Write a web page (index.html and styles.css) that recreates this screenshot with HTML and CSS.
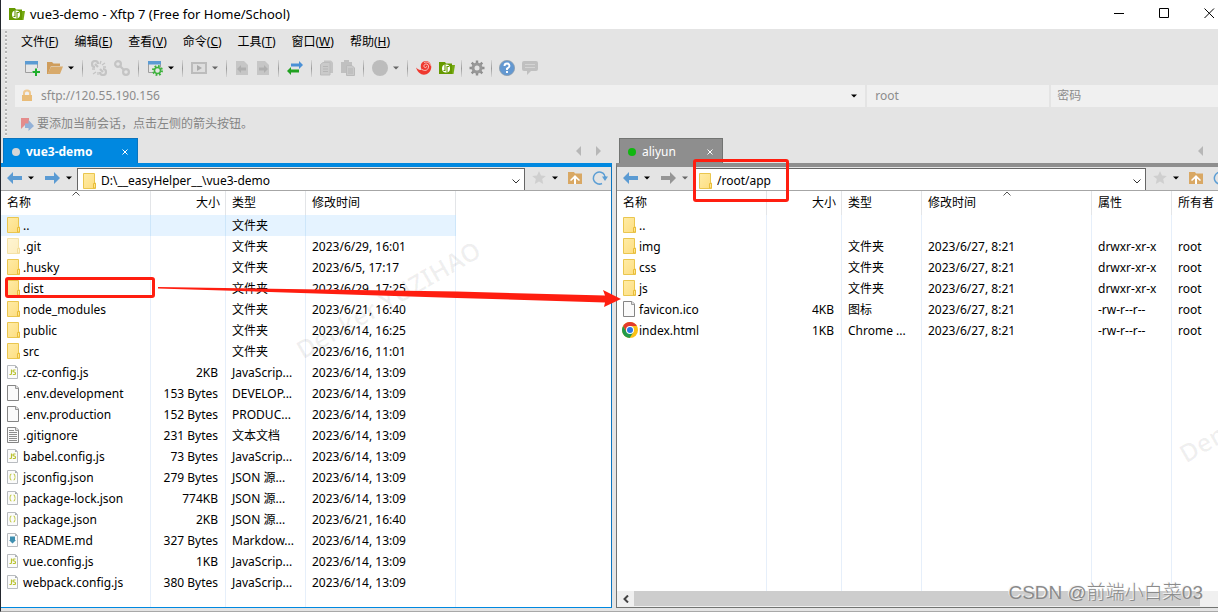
FILE: index.html
```html
<!DOCTYPE html>
<html lang="zh-CN">
<head>
<meta charset="utf-8">
<title>vue3-demo - Xftp 7 (Free for Home/School)</title>
<link rel="stylesheet" href="styles.css">
</head>
<body>
<svg class="defs" aria-hidden="true">
  <defs>
    <linearGradient id="gold" x1="0" y1="0" x2="1" y2="1"><stop offset="0" stop-color="#ffeca6"/><stop offset="1" stop-color="#fddd80"/></linearGradient>
  </defs>
  <symbol id="folder" viewBox="0 0 16 16"><path d="M1.500 .5h11v9.500h1v5.500h-12z" fill="url(#gold)" stroke="#eac64f"/><path d="M11.500 15v-4.500h2V15z" fill="#ffe690" stroke="#e9bd3a"/></symbol>
  <symbol id="page" viewBox="0 0 16 16"><path d="M1.500 .5h8.500l2.500 2.500v12.500h-11z" fill="#fafafa" stroke="#858585"/><path d="M9.500 .5v3h3" fill="#ddd" stroke="#999"/></symbol>
  <symbol id="text" viewBox="0 0 16 16"><use href="#page"/><path d="M3 3.500h5M3 5.500h8M3 7.500h8M3 9.500h8M3 11.500h8M3 13.500h8" stroke="#8d8d8d"/></symbol>
  <symbol id="paper" viewBox="0 0 16 16"><path d="M1.500 1.500h8l2 2v11h-10z" fill="#fbfbfb" stroke="#b9bcc0"/><path d="M9 1.500v2.500h2.500z" fill="#a7abb0"/></symbol>
  <symbol id="js" viewBox="0 0 16 16"><use href="#paper"/><path d="M5.500 5.500v4q0 1-1 1H3.500M9.500 6H7.800q-.8 0-.8 1t1.200 1 1.300 1.200-1 1.300H6.800" fill="none" stroke="#b9c22f" stroke-width="1.200"/></symbol>
  <symbol id="json" viewBox="0 0 16 16"><use href="#paper"/><path d="M5.500 5q-1.300 0-1.300 1.500T3.500 8q.7 0 .7 1.500t1.300 1.500M7.500 5q1.300 0 1.300 1.500T9.500 8q-.7 0-.7 1.500T7.500 11" fill="none" stroke="#c5cd52" stroke-width="1.100"/></symbol>
  <symbol id="md" viewBox="0 0 16 16"><use href="#paper"/><path d="M4 4.500h5v3.500h1L6.500 11.500 3 8h1z" fill="#3f8fb0"/></symbol>
  <symbol id="chrome" viewBox="0 0 16 16"><circle cx="8" cy="8" r="8" fill="#fbc116"/><path d="M1.100 4A8 8 0 0 1 14.900 4H8L4.600 10z" fill="#e33b2e"/><path d="M1.100 4A8 8 0 0 0 7.600 16l3.900-6H4.600z" fill="#229a4c"/><circle cx="8" cy="8" r="4" fill="#fff"/><circle cx="8" cy="8" r="3" fill="#2876e8"/></symbol>
  <symbol id="left" viewBox="0 0 16 16"><path d="M0 8l6-6v4h9v4H6v4z"/></symbol>
  <symbol id="right" viewBox="0 0 16 16"><path d="M15 8L9 2v4H0v4h9v4z"/></symbol>
  <symbol id="caret" viewBox="0 0 6 4"><path d="M0 .5h6L3 3.500z"/></symbol>
  <symbol id="star" viewBox="0 0 16 16"><path d="M8 1l2 4.500 4.800.4-3.600 3.200 1 4.900L8 11.500 3.800 14l1-4.900L1.200 5.900 6 5.500z" fill="#cfcfcf"/></symbol>
  <symbol id="up" viewBox="0 0 16 16"><path d="M1 2h6l1 1.500h7V14H1z" fill="#d9a864"/><path d="M3 10l5-5 5 5-1 1-3-2.500V14H7V8.500L4 11z" fill="#fff"/></symbol>
  <symbol id="reload" viewBox="0 0 16 16"><path d="M12.500 5A6 6 0 1 0 10 13.500" fill="none" stroke="#5c9ed4" stroke-width="1.500"/><path d="M12 4v2.500h-2l3 4.500 3-4.500h-2z" fill="#5c9ed4"/></symbol>
  <symbol id="green" viewBox="0 0 16 16"><path d="M0 2h6l1 1.500h6V14H0z" fill="#659900"/><path d="M13 5h3l-1.500 9H13z" fill="#75aa12"/><circle cx="7" cy="8.500" r="4" fill="#fff"/><path d="M6 4.500v6H4.500M8 12.500v-6h2" fill="none" stroke="#659900" stroke-width="1.100"/></symbol>
  <symbol id="window" viewBox="0 0 16 16"><path d="M1.500 1.500h12v11h-12z" fill="#e6e6e6" stroke="#9e9e9e"/><path d="M1 1h13v3.500H1z" fill="#5b9bd3"/></symbol>
  <symbol id="newwin" viewBox="0 0 16 16"><use href="#window"/><path d="M8 12h8M12 8v8" stroke="#e4e4e4" stroke-width="4"/><path d="M8.500 12H16M12 8.500V16" stroke="#1fae2c" stroke-width="2"/></symbol>
  <symbol id="setwin" viewBox="0 0 16 16"><use href="#window"/><circle cx="10.500" cy="10.500" r="4" fill="#e4e4e4" stroke="#3eb23d" stroke-width="3" stroke-dasharray="1.600 1.540"/><circle cx="10.500" cy="10.500" r="3" fill="#e4e4e4" stroke="#3eb23d" stroke-width="1.500"/></symbol>
  <symbol id="open" viewBox="0 0 16 16"><path d="M0 2h5l1.500 1.500H13V6H4L1 14H0z" fill="#cf9d5c"/><path d="M4 6.500h12L13 14H.8z" fill="#d8aa6b"/></symbol>
  <symbol id="link" viewBox="0 0 16 16"><g fill="none" stroke="#c4c4c4" stroke-width="2.200"><circle cx="4" cy="4" r="2.900"/><circle cx="12" cy="12" r="2.900"/><path d="M5.500 5.500l5 5"/></g></symbol>
  <symbol id="unlink" viewBox="0 0 16 16"><g fill="none" stroke="#c4c4c4"><path d="M7 4A3 3 0 1 0 4 7M9 12a3 3 0 1 0 3-3M4 4l3 3M9 9l3 3" stroke-width="2.200"/><path d="M9 4l1-3M11 5l3-2M12 7h3M1 9h3M2 14l3-2M7 15v-3" stroke-width="1.300"/></g></symbol>
  <symbol id="play" viewBox="0 0 16 16"><path d="M1 3h14v10H1z" fill="#dedede" stroke="#bcbcbc" stroke-width="2"/><path d="M6 5l5 3-5 3z" fill="#ababab"/></symbol>
  <symbol id="docleft" viewBox="0 0 14 16"><path d="M1 1h8l4 4v10H1z" fill="#c6c6c6"/><path d="M2 9l4-4v2.500h5v3H6V13z" fill="#afafaf"/></symbol>
  <symbol id="docright" viewBox="0 0 14 16"><path d="M1 1h8l4 4v10H1z" fill="#c6c6c6"/><path d="M12 9L8 5v2.500H3v3h5V13z" fill="#afafaf"/></symbol>
  <symbol id="swap" viewBox="0 0 16 16"><path d="M16 5l-4-4v2.500H4v3h8V9z" fill="#4a90d6"/><path d="M0 11l4-4v2.500h8v3H4V15z" fill="#21a121"/></symbol>
  <symbol id="copy" viewBox="0 0 14 16"><path d="M4 .5h7l2 2V13H4z" fill="#c4c4c4"/><path d="M.5 4.500L3 2.500h7V15H.5z" fill="#cacaca" stroke="#bcbcbc"/><path d="M3 6.500h5M3 9h5M3 11.500h5" stroke="#b6b6b6"/></symbol>
  <symbol id="paste" viewBox="0 0 14 16"><path d="M0 2h3V0h5v2h3v11H0z" fill="#c0c0c0"/><path d="M5.500 5.500H11l2.500 2.500v7.500h-8z" fill="#cacaca" stroke="#bababa"/><path d="M7 9h5M7 11h5M7 13h5" stroke="#b6b6b6"/></symbol>
  <symbol id="disc" viewBox="0 0 16 16"><circle cx="8" cy="8" r="8" fill="#bcbcbc"/></symbol>
  <symbol id="swirl" viewBox="0 0 16 16"><path d="M0 7.500C2 14 8 17 13 12.500 18 7 14 0 9 1 4 2 4 8 6 9.500 4 10.500 2 9.500 0 7.500z" fill="#ef392f"/><path d="M6 9.500c4 2.500 7-.5 6.500-3.500S7.500 3.500 8 6.500c.5 1.800 3 1.200 2.500-.3M8 2.500c3-1.500 6 .5 6.500 3" fill="none" stroke="#f7d0cc" stroke-width=".9"/></symbol>
  <symbol id="gear" viewBox="0 0 16 16"><path d="M8 .5v15M.5 8h15M2.700 2.700l10.600 10.600M13.300 2.700L2.700 13.300" stroke="#8f8f8f" stroke-width="2.400"/><circle cx="8" cy="8" r="4" fill="#e4e4e4" stroke="#989898" stroke-width="3"/></symbol>
  <symbol id="help" viewBox="0 0 16 16"><circle cx="8" cy="8" r="7.600" fill="#6398d1" stroke="#8c9dad" stroke-width=".8"/><path d="M5.500 6q0-2.500 2.500-2.500T10.500 6Q10.500 7.300 8 8.500V10M8 11v2" fill="none" stroke="#fff" stroke-width="1.900"/></symbol>
  <symbol id="chat" viewBox="0 0 16 16"><path d="M2 1h12q2 0 2 2v6q0 2-2 2H9l-4 4v-4H2q-2 0-2-2V3q0-2 2-2z" fill="#c0c0c0"/><path d="M3 4.500h10M3 7.500h10" stroke="#d4d4d4" stroke-width="1.200"/></symbol>
  <symbol id="lock" viewBox="0 0 16 16"><path d="M5 8V5q0-2.500 3-2.500T11 5v3" fill="none" stroke="#efc88f" stroke-width="2"/><path d="M3 7h10v6H3z" fill="#e9bc78"/></symbol>
  <symbol id="flag" viewBox="0 0 16 16"><path d="M2 2h8v10L6 9l-4 4z" fill="#e48c8c"/><path d="M15 10L9.500 4v3.500H6V12h3.500v3z" fill="#93b1d7"/></symbol>
</svg>

<div class="app">
  <header class="titlebar">
    <svg class="icon"><use href="#green"/></svg>
    <h1>vue3-demo - Xftp 7 (Free for Home/School)</h1>
    <button aria-label="最小化"><svg viewBox="0 0 11 11"><path d="M0 5.500h10"/></svg></button>
    <button aria-label="最大化"><svg viewBox="0 0 11 11"><path d="M.5 .5h9v9h-9z"/></svg></button>
    <button aria-label="关闭"><svg viewBox="0 0 11 11"><path d="M.5 .5l9.500 9.500M10 .5L.5 10"/></svg></button>
  </header>

  <nav class="menu grip">
    <button>文件(<u>F</u>)</button><button>编辑(<u>E</u>)</button><button>查看(<u>V</u>)</button><button>命令(<u>C</u>)</button><button>工具(<u>T</u>)</button><button>窗口(<u>W</u>)</button><button>帮助(<u>H</u>)</button>
  </nav>

  <div class="tools grip">
    <button aria-label="新建"><svg class="icon"><use href="#newwin"/></svg></button>
    <button aria-label="打开"><svg class="icon"><use href="#open"/></svg></button>
    <button class="drop" aria-label="打开选项"><svg class="caret"><use href="#caret"/></svg></button>
    <i class="sep"></i>
    <button aria-label="断开"><svg class="icon"><use href="#unlink"/></svg></button>
    <button aria-label="重新连接"><svg class="icon"><use href="#link"/></svg></button>
    <i class="sep"></i>
    <button aria-label="属性"><svg class="icon"><use href="#setwin"/></svg></button>
    <button class="drop" aria-label="属性选项"><svg class="caret"><use href="#caret"/></svg></button>
    <i class="sep"></i>
    <button aria-label="运行"><svg class="icon"><use href="#play"/></svg></button>
    <button class="drop dim" aria-label="运行选项"><svg class="caret"><use href="#caret"/></svg></button>
    <i class="sep"></i>
    <button aria-label="向左传输"><svg class="icon slim"><use href="#docleft"/></svg></button>
    <button aria-label="向右传输"><svg class="icon slim"><use href="#docright"/></svg></button>
    <i class="sep"></i>
    <button aria-label="同步"><svg class="icon"><use href="#swap"/></svg></button>
    <i class="sep"></i>
    <button aria-label="复制"><svg class="icon slim"><use href="#copy"/></svg></button>
    <button aria-label="粘贴"><svg class="icon slim"><use href="#paste"/></svg></button>
    <i class="sep"></i>
    <button aria-label="编码"><svg class="icon"><use href="#disc"/></svg></button>
    <button class="drop dim" aria-label="编码选项"><svg class="caret"><use href="#caret"/></svg></button>
    <i class="sep"></i>
    <button aria-label="Xshell"><svg class="icon"><use href="#swirl"/></svg></button>
    <button aria-label="Xftp"><svg class="icon"><use href="#green"/></svg></button>
    <i class="sep tight"></i>
    <button aria-label="选项"><svg class="icon"><use href="#gear"/></svg></button>
    <i class="sep tight"></i>
    <button aria-label="帮助"><svg class="icon"><use href="#help"/></svg></button>
    <button aria-label="反馈"><svg class="icon"><use href="#chat"/></svg></button>
  </div>

  <form class="connect grip">
    <div class="field host"><svg class="icon"><use href="#lock"/></svg><input aria-label="地址" value="sftp://120.55.190.156"><button type="button" aria-label="历史"><svg class="caret"><use href="#caret"/></svg></button></div>
    <div class="field user"><input aria-label="用户名" value="root"></div>
    <div class="field pass"><input aria-label="密码" type="text" placeholder="密码"></div>
  </form>

  <p class="hint grip"><svg class="icon"><use href="#flag"/></svg>要添加当前会话，点击左侧的箭头按钮。</p>

  <main class="panes">
    <section class="pane local">
      <div class="tabs">
        <div class="tab"><i class="dot"></i><button class="label">vue3-demo</button><button aria-label="关闭标签"><svg class="close" viewBox="0 0 6 6"><path d="M.5 .5l5 5M5.500 .5l-5 5"/></svg></button></div>
        <button class="scroll" aria-label="上一个"><svg viewBox="0 0 5 10"><path d="M5 0v10L0 5z"/></svg></button>
        <button class="scroll" aria-label="下一个"><svg viewBox="0 0 5 10"><path d="M0 0v10l5-5z"/></svg></button>
      </div>
      <div class="view">
        <div class="nav">
          <button aria-label="后退"><svg class="icon arrow"><use href="#left"/></svg></button>
          <button aria-label="后退历史"><svg class="caret"><use href="#caret"/></svg></button>
          <button aria-label="前进"><svg class="icon arrow"><use href="#right"/></svg></button>
          <button aria-label="前进历史"><svg class="caret"><use href="#caret"/></svg></button>
          <div class="path"><svg class="icon"><use href="#folder"/></svg><input aria-label="本地路径" value="D:\__easyHelper__\vue3-demo"><button aria-label="展开"><svg class="chev" viewBox="0 0 8 5"><path d="M.5 .5L4 4 7.500 .5"/></svg></button></div>
          <button aria-label="收藏"><svg class="icon"><use href="#star"/></svg></button>
          <button aria-label="收藏选项"><svg class="caret"><use href="#caret"/></svg></button>
          <button aria-label="上级目录"><svg class="icon"><use href="#up"/></svg></button>
          <button aria-label="刷新"><svg class="icon"><use href="#reload"/></svg></button>
        </div>
        <div class="list">
          <table>
            <colgroup><col class="w-name"><col class="w-size"><col class="w-type"><col class="w-date"></colgroup>
            <thead><tr><th class="sorted">名称<svg class="sort" viewBox="0 0 8 5"><path d="M.5 4.500L4 1l3.500 3.500"/></svg></th><th class="num">大小</th><th>类型</th><th>修改时间</th></tr></thead>
            <tbody>
              <tr class="selected"><td><svg class="icon"><use href="#folder"/></svg>..</td><td></td><td>文件夹</td><td></td></tr>
              <tr><td><svg class="icon faded"><use href="#folder"/></svg>.git</td><td></td><td>文件夹</td><td>2023/6/29, 16:01</td></tr>
              <tr><td><svg class="icon"><use href="#folder"/></svg>.husky</td><td></td><td>文件夹</td><td>2023/6/5, 17:17</td></tr>
              <tr><td><svg class="icon"><use href="#folder"/></svg>dist</td><td></td><td>文件夹</td><td>2023/6/29, 17:25</td></tr>
              <tr><td><svg class="icon"><use href="#folder"/></svg>node_modules</td><td></td><td>文件夹</td><td>2023/6/21, 16:40</td></tr>
              <tr><td><svg class="icon"><use href="#folder"/></svg>public</td><td></td><td>文件夹</td><td>2023/6/14, 16:25</td></tr>
              <tr><td><svg class="icon"><use href="#folder"/></svg>src</td><td></td><td>文件夹</td><td>2023/6/16, 11:01</td></tr>
              <tr><td><svg class="icon"><use href="#js"/></svg>.cz-config.js</td><td class="num">2KB</td><td>JavaScrip...</td><td>2023/6/14, 13:09</td></tr>
              <tr><td><svg class="icon"><use href="#page"/></svg>.env.development</td><td class="num">153 Bytes</td><td>DEVELOP...</td><td>2023/6/14, 13:09</td></tr>
              <tr><td><svg class="icon"><use href="#page"/></svg>.env.production</td><td class="num">152 Bytes</td><td>PRODUC...</td><td>2023/6/14, 13:09</td></tr>
              <tr><td><svg class="icon"><use href="#text"/></svg>.gitignore</td><td class="num">231 Bytes</td><td>文本文档</td><td>2023/6/14, 13:09</td></tr>
              <tr><td><svg class="icon"><use href="#js"/></svg>babel.config.js</td><td class="num">73 Bytes</td><td>JavaScrip...</td><td>2023/6/14, 13:09</td></tr>
              <tr><td><svg class="icon"><use href="#json"/></svg>jsconfig.json</td><td class="num">279 Bytes</td><td>JSON 源...</td><td>2023/6/14, 13:09</td></tr>
              <tr><td><svg class="icon"><use href="#json"/></svg>package-lock.json</td><td class="num">774KB</td><td>JSON 源...</td><td>2023/6/14, 13:09</td></tr>
              <tr><td><svg class="icon"><use href="#json"/></svg>package.json</td><td class="num">2KB</td><td>JSON 源...</td><td>2023/6/21, 16:40</td></tr>
              <tr><td><svg class="icon"><use href="#md"/></svg>README.md</td><td class="num">327 Bytes</td><td>Markdow...</td><td>2023/6/14, 13:09</td></tr>
              <tr><td><svg class="icon"><use href="#js"/></svg>vue.config.js</td><td class="num">1KB</td><td>JavaScrip...</td><td>2023/6/14, 13:09</td></tr>
              <tr><td><svg class="icon"><use href="#js"/></svg>webpack.config.js</td><td class="num">380 Bytes</td><td>JavaScrip...</td><td>2023/6/14, 13:09</td></tr>
              <tr class="rest"><td></td><td></td><td></td><td></td></tr>
            </tbody>
          </table>
        </div>
      </div>
    </section>

    <section class="pane remote">
      <div class="tabs">
        <div class="tab"><i class="dot"></i><button class="label">aliyun</button><button aria-label="关闭标签"><svg class="close" viewBox="0 0 6 6"><path d="M.5 .5l5 5M5.500 .5l-5 5"/></svg></button></div>
        <button class="scroll" aria-label="上一个"><svg viewBox="0 0 5 10"><path d="M5 0v10L0 5z"/></svg></button>
      </div>
      <div class="view">
        <div class="nav">
          <button aria-label="后退"><svg class="icon arrow"><use href="#left"/></svg></button>
          <button aria-label="后退历史"><svg class="caret"><use href="#caret"/></svg></button>
          <button class="dim" aria-label="前进"><svg class="icon arrow"><use href="#right"/></svg></button>
          <button class="dim" aria-label="前进历史"><svg class="caret"><use href="#caret"/></svg></button>
          <div class="path"><svg class="icon"><use href="#folder"/></svg><input aria-label="远程路径" value="/root/app"><button aria-label="展开"><svg class="chev" viewBox="0 0 8 5"><path d="M.5 .5L4 4 7.500 .5"/></svg></button></div>
          <button aria-label="收藏"><svg class="icon"><use href="#star"/></svg></button>
          <button aria-label="收藏选项"><svg class="caret"><use href="#caret"/></svg></button>
          <button aria-label="上级目录"><svg class="icon"><use href="#up"/></svg></button>
          <button aria-label="刷新"><svg class="icon"><use href="#reload"/></svg></button>
        </div>
        <div class="list">
          <table>
            <colgroup><col class="w-name"><col class="w-size"><col class="w-type"><col class="w-stamp"><col class="w-mode"><col></colgroup>
            <thead><tr><th>名称</th><th class="num">大小</th><th>类型</th><th class="sorted">修改时间<svg class="sort" viewBox="0 0 8 5"><path d="M.5 4.500L4 1l3.500 3.500"/></svg></th><th>属性</th><th>所有者</th></tr></thead>
            <tbody>
              <tr><td><svg class="icon"><use href="#folder"/></svg>..</td><td></td><td></td><td></td><td></td><td></td></tr>
              <tr><td><svg class="icon"><use href="#folder"/></svg>img</td><td></td><td>文件夹</td><td>2023/6/27, 8:21</td><td>drwxr-xr-x</td><td>root</td></tr>
              <tr><td><svg class="icon"><use href="#folder"/></svg>css</td><td></td><td>文件夹</td><td>2023/6/27, 8:21</td><td>drwxr-xr-x</td><td>root</td></tr>
              <tr><td><svg class="icon"><use href="#folder"/></svg>js</td><td></td><td>文件夹</td><td>2023/6/27, 8:21</td><td>drwxr-xr-x</td><td>root</td></tr>
              <tr><td><svg class="icon"><use href="#page"/></svg>favicon.ico</td><td class="num">4KB</td><td>图标</td><td>2023/6/27, 8:21</td><td>-rw-r--r--</td><td>root</td></tr>
              <tr><td><svg class="icon"><use href="#chrome"/></svg>index.html</td><td class="num">1KB</td><td>Chrome ...</td><td>2023/6/27, 8:21</td><td>-rw-r--r--</td><td>root</td></tr>
              <tr class="rest"><td></td><td></td><td></td><td></td><td></td><td></td></tr>
            </tbody>
          </table>
        </div>
        <div class="hbar"><button aria-label="向左滚动"><svg viewBox="0 0 6 8"><path d="M5 .5L1.500 4 5 7.500"/></svg></button><i class="thumb"></i></div>
      </div>
    </section>
  </main>

  <span class="stamp stamp-a">Denker YUZIHAO</span>
  <span class="stamp stamp-b">Den</span>
  <span class="mark mark-dist"></span>
  <span class="mark mark-path"></span>
  <svg class="pointer" viewBox="0 0 464 20"><path d="M1 0l299 4.500 148 4L446 3l18 9-17 8 1-4.500-148-4.500L1 1.500z"/></svg>
  <span class="credit">CSDN @前端小白菜03</span>
</div>
</body>
</html>
```

FILE: styles.css
```css
* { box-sizing: border-box; }

html, body { height: 100%; margin: 0; }

body, button, input {
  font-family: "Noto Sans", "Noto Sans CJK SC", sans-serif;
  font-size: 12px;
  line-height: 20px;
  color: #000;
}

button {
  display: flex;
  align-items: center;
  flex: none;
  padding: 0;
  border: 0;
  background: none;
}

input {
  flex: 1;
  min-width: 0;
  padding: 0;
  border: 0;
  background: none;
  outline: none;
}

svg { display: block; flex: none; }
.defs { position: absolute; width: 0; height: 0; }
.icon { width: 16px; height: 16px; }
.slim { width: 14px; }
.caret { width: 6px; height: 4px; }

.app {
  position: relative;
  display: flex;
  flex-direction: column;
  height: 100%;
  overflow: hidden;
  background: #e4e4e4;
  border-left: 1px solid #23272e;
  border-bottom: 1px solid #a8a8a8;
}

.titlebar {
  display: flex;
  align-items: center;
  height: 29px;
  padding: 0 3px 2px 8px;
  gap: 5px;
  background: #fff;
}
.titlebar h1 { flex: 1; margin: 0; font-size: 13px; font-weight: 400; }
.titlebar button + button { margin-left: 29px; }
.titlebar button svg { width: 11px; height: 11px; fill: none; stroke: #000; }

.grip {
  background: repeating-linear-gradient(#b4b4b4 0 2px, #f4f4f4 2px 3px, transparent 3px 4px) 4px 2px / 2px calc(100% - 3px) no-repeat;
}

.menu { display: flex; gap: 16px; height: 26px; padding-left: 20px; }

.tools { display: flex; align-items: center; gap: 7px; height: 30px; padding: 0 0 4px 23px; }
.drop { margin-left: -2px; }
.dim { opacity: .55; }
.sep { width: 1px; height: 17px; margin: 0 1px; background: linear-gradient(#d6d6d6, #9c9c9c, #d6d6d6); }
.sep.tight { margin: 0 0 0 -1px; }

.connect { display: flex; gap: 2px; height: 22px; margin: 0; padding-left: 14px; }
.field { display: flex; align-items: center; min-width: 0; background: #f0f0f0; }
.field input, .field input::placeholder { color: #8c8c8c; opacity: 1; }
.host { flex: 839; padding: 0 8px 0 4px; gap: 6px; }
.user { flex: 174; padding-left: 8px; }
.pass { flex: 161; padding-left: 6px; }

.hint { display: flex; align-items: center; gap: 2px; height: 31px; margin: 0; padding: 2px 0 0 18px; color: #858585; }

.panes {
  flex: 1;
  display: grid;
  grid-template-columns: 611fr 602fr;
  gap: 4px;
  min-height: 0;
  padding-bottom: 3px;
}

.pane { display: flex; flex-direction: column; min-width: 0; min-height: 0; overflow: hidden; }
.local { --accent: #0088e0; --edge: #0b74bd; --dot: #d6d6d6; }
.remote { --accent: #8e8e8e; --edge: #727472; --dot: #10b710; }

.tabs { display: flex; align-items: center; gap: 15px; height: 25px; padding: 0 11px 0 2px; }
.tab {
  display: flex;
  align-items: center;
  gap: 6px;
  width: 135px;
  height: 25px;
  margin-right: auto;
  padding: 2px 9px 0 8px;
  background: var(--accent);
  border: 1px solid var(--edge);
  border-bottom: 0;
}
.remote .tab { width: 104px; margin-left: 1px; }
.remote .tabs { padding-right: 15px; }
.dot { width: 8px; height: 8px; border-radius: 50%; background: var(--dot); }
.label { flex: 1; color: #fff; }
.local .label { font-weight: 700; }
.close { width: 6px; height: 6px; fill: none; stroke: #fff; }
.scroll svg { width: 5px; height: 10px; fill: #b7b7b7; }

.view {
  flex: 1;
  display: flex;
  flex-direction: column;
  min-height: 0;
  background: #fff;
  border-top: 4px solid var(--accent);
}
.local .view { border-right: 1px solid var(--edge); border-bottom: 1px solid var(--accent); }
.remote .view { border-left: 1px solid var(--edge); border-bottom: 1px solid var(--edge); }

.nav {
  display: flex;
  align-items: center;
  gap: 5px;
  height: 24px;
  padding: 0 3px 0 6px;
  background: #e4e4e4;
  border-bottom: 1px solid #a6a6a6;
}
.remote .nav { margin-right: -14px; }
.nav > button { padding-bottom: 1px; }
.nav > button:nth-child(3) { margin-left: 6px; }
.nav > .path + button { margin-left: 1px; }
.nav > .path ~ button:nth-child(n + 8) { margin-left: 4px; }
.arrow { fill: #5b9bd3; }
.dim .arrow { fill: #555; }
.path {
  flex: 1;
  display: flex;
  align-items: center;
  gap: 3px;
  min-width: 0;
  height: 22px;
  margin-top: 1px;
  padding: 3px 4px 0 4px;
  background: #fff;
  border: 1px solid #666;
  border-bottom: 0;
}
.chev { width: 8px; height: 5px; fill: none; stroke: #333; }

.list { flex: 1; min-height: 0; overflow: hidden; }
table { height: 100%; border-collapse: separate; border-spacing: 0; table-layout: fixed; }
.local table { width: 455px; }
.remote table { width: 100%; }
.w-name { width: 150px; }
.w-size { width: 75px; }
.w-type { width: 80px; }
.w-date { width: 150px; }
.w-stamp { width: 170px; }
.w-mode { width: 80px; }

th, td {
  height: 21px;
  padding: 0 0 0 6px;
  border-right: 1px solid #e6effa;
  font-weight: 400;
  text-align: left;
  white-space: nowrap;
  overflow: hidden;
}
th { height: 24px; border-color: #e3e5e8; }
.remote th:last-child, .remote td:last-child { border-right: 0; }
td:first-child { padding-left: 5px; }
.num { padding-right: 7px; text-align: right; }
th.num { padding-right: 5px; }
td .icon { display: inline-block; margin: 0 1px 2px 0; vertical-align: middle; }
.faded { opacity: .5; }
.selected td { background: #e5f3ff; border-color: #cde6fa; }
.rest td { height: auto; }
.sorted { position: relative; }
.sort { position: absolute; top: 0; left: calc(50% - 4px); width: 8px; height: 5px; fill: none; stroke: #555; }

.hbar { display: flex; height: 16px; background: #f0f0f0; padding: 0 18px 1px 0; }
.hbar button { width: 17px; justify-content: center; }
.hbar svg { width: 6px; height: 8px; fill: none; stroke: #444; stroke-width: 2; }
.thumb { flex: 1; background: #cdcdcd; }

/* Annotations drawn over the window */
.mark { position: absolute; border: 3px solid #ff1e10; border-radius: 3px; }
.mark-dist { left: 4px; top: 277px; width: 150px; height: 21px; }
.mark-path { left: 692px; top: 159px; width: 96px; height: 43px; }
.pointer { position: absolute; left: 156px; top: 287px; width: 464px; height: 20px; fill: #ff1e10; }

.stamp {
  position: absolute;
  font-size: 25px;
  font-weight: 600;
  line-height: 30px;
  white-space: nowrap;
  color: rgba(0, 0, 0, .06);
  transform: rotate(-30deg);
  transform-origin: 0 50%;
}
.stamp-a { left: 297px; top: 336px; }
.stamp-b { left: 1180px; top: 440px; }

.credit {
  position: absolute;
  right: 15px;
  bottom: 5px;
  font-family: "Liberation Sans", "Noto Sans CJK SC", sans-serif;
  font-size: 19px;
  font-weight: 300;
  line-height: 26px;
  white-space: nowrap;
  color: #8a8a8a;
  text-shadow: -1px -1px 0 #f4f4f4;
}
```
